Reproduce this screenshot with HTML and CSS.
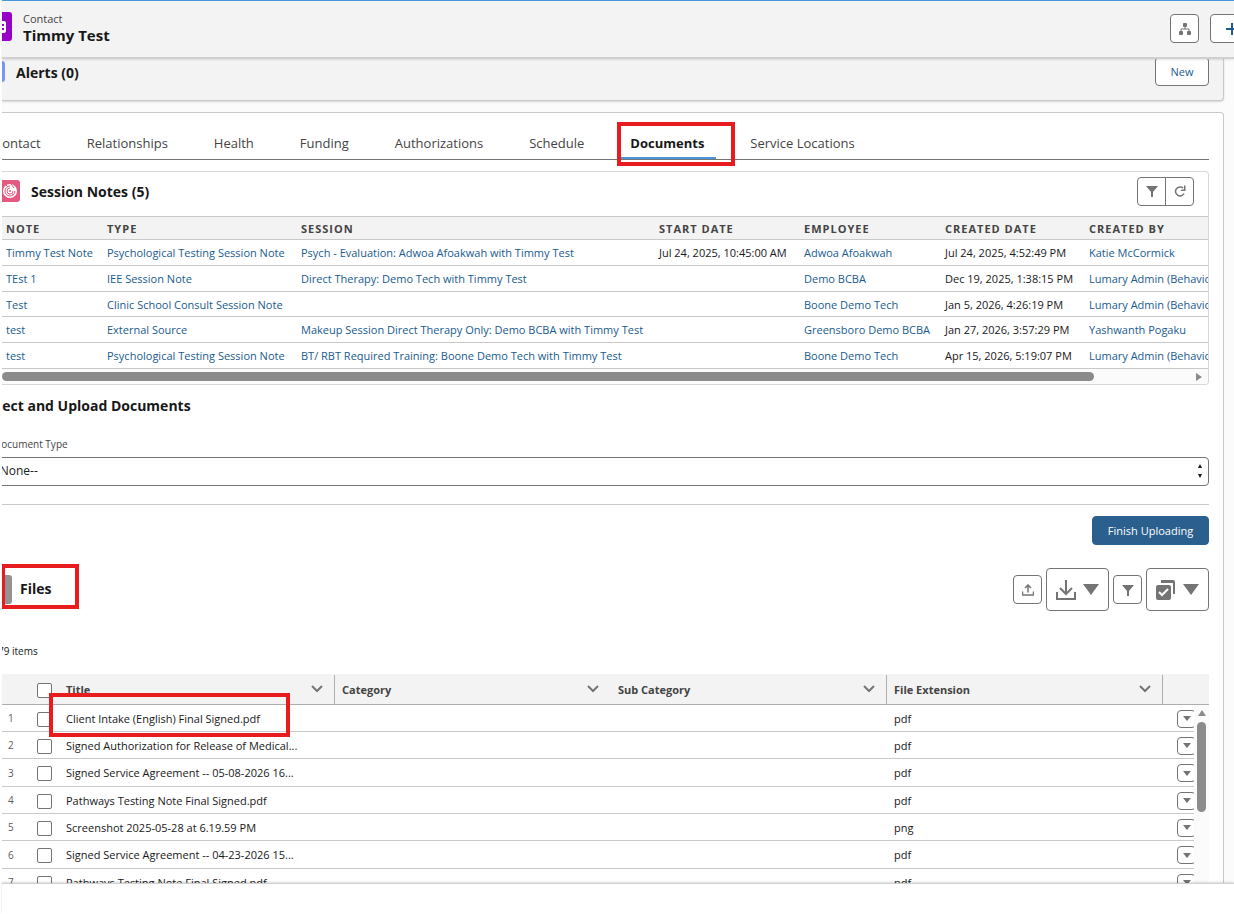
FILE: index.html
```html
<!DOCTYPE html>
<html lang="en">
<head>
  <meta charset="UTF-8">
  <meta name="viewport" content="width=device-width, initial-scale=1.0">
  <title>Timmy Test | Contact</title>
  <link rel="stylesheet" href="styles.css">
</head>
<body>

<header class="page-header">
  <svg class="icon-contact" viewBox="0 0 29 29" aria-hidden="true">
    <rect width="29" height="29" rx="3" fill="#9602c7"/>
    <rect x="6" y="9" width="17" height="12" rx="2" fill="#fff"/>
    <path d="M18 13h3M18 17h3" stroke="#9602c7" stroke-width="2"/>
    <circle cx="12" cy="14" r="3" fill="#9602c7"/>
  </svg>
  <div class="record">
    <span class="record-type">Contact</span>
    <h1>Timmy Test</h1>
  </div>
  <div class="header-actions">
    <button class="btn-icon" aria-label="View hierarchy">
      <svg width="12" height="12" viewBox="0 0 12 12" fill="#747474">
        <rect x="4" y="0" width="4" height="4" rx="1"/>
        <rect x="0" y="8" width="4" height="4" rx="1"/>
        <rect x="8" y="8" width="4" height="4" rx="1"/>
        <path d="M6 3v3M2 9V6h8v3" fill="none" stroke="#747474"/>
      </svg>
    </button>
    <button class="btn-follow" aria-label="Follow">
      <svg width="14" height="14" viewBox="0 0 14 14"><path d="M7 1v12M1 7h12" stroke="#205b8f" stroke-width="2"/></svg>
    </button>
  </div>
</header>

<main>
  <section class="alerts">
    <span class="alerts-icon"></span>
    <h2>Alerts (0)</h2>
    <button class="btn-new">New</button>
  </section>

  <div class="panel">
    <nav class="tabs">
      <a href="#">Contact</a>
      <a href="#">Relationships</a>
      <a href="#">Health</a>
      <a href="#">Funding</a>
      <a href="#">Authorizations</a>
      <a href="#">Schedule</a>
      <a href="#" class="active">Documents</a>
      <a href="#">Service Locations</a>
    </nav>

    <section class="notes">
      <div class="notes-head">
        <svg class="icon-notes" viewBox="0 0 22 22" aria-hidden="true">
          <rect width="22" height="22" rx="3" fill="#e3597f"/>
          <circle cx="12" cy="11" r="7" fill="#fff"/>
          <path d="M12 6a5 5 0 1 0 5 5M12 8a3 3 0 1 0 3 3M8 5l2 2M13 4l3 4M16 15l-2-1" fill="none" stroke="#e3597f"/>
          <circle cx="12" cy="11" r="1" fill="#e3597f"/>
        </svg>
        <h2>Session Notes (5)</h2>
        <div class="btn-group">
          <button aria-label="Filter">
            <svg width="12" height="12" viewBox="0 0 12 12"><path d="M0 1h12L7 7v5H5V7z" fill="#747474"/></svg>
          </button>
          <button aria-label="Refresh">
            <svg width="12" height="12" viewBox="0 0 12 12"><path d="M10 8.500A4.500 4.500 0 1 1 9 3" fill="none" stroke="#747474" stroke-width="1.500"/><path d="M11.500 .5V6H6L8 4.500H10V.5z" fill="#747474"/></svg>
          </button>
        </div>
      </div>
      <div class="notes-scroll">
        <table class="notes-table">
          <colgroup>
            <col class="c-note"><col class="c-type"><col class="c-session"><col class="c-start"><col class="c-employee"><col class="c-created"><col class="c-by">
          </colgroup>
          <thead>
            <tr><th>Note</th><th>Type</th><th>Session</th><th>Start Date</th><th>Employee</th><th>Created Date</th><th>Created By</th></tr>
          </thead>
          <tbody>
            <tr>
              <td><a href="#">Timmy Test Note</a></td>
              <td><a href="#">Psychological Testing Session Note</a></td>
              <td><a href="#">Psych - Evaluation: Adwoa Afoakwah with Timmy Test</a></td>
              <td>Jul 24, 2025, 10:45:00 AM</td>
              <td><a href="#">Adwoa Afoakwah</a></td>
              <td>Jul 24, 2025, 4:52:49 PM</td>
              <td><a href="#">Katie McCormick</a></td>
            </tr>
            <tr>
              <td><a href="#">TEst 1</a></td>
              <td><a href="#">IEE Session Note</a></td>
              <td><a href="#">Direct Therapy: Demo Tech with Timmy Test</a></td>
              <td></td>
              <td><a href="#">Demo BCBA</a></td>
              <td>Dec 19, 2025, 1:38:15 PM</td>
              <td><a href="#">Lumary Admin (Behavior)</a></td>
            </tr>
            <tr>
              <td><a href="#">Test</a></td>
              <td><a href="#">Clinic School Consult Session Note</a></td>
              <td></td>
              <td></td>
              <td><a href="#">Boone Demo Tech</a></td>
              <td>Jan 5, 2026, 4:26:19 PM</td>
              <td><a href="#">Lumary Admin (Behavior)</a></td>
            </tr>
            <tr>
              <td><a href="#">test</a></td>
              <td><a href="#">External Source</a></td>
              <td><a href="#">Makeup Session Direct Therapy Only: Demo BCBA with Timmy Test</a></td>
              <td></td>
              <td><a href="#">Greensboro Demo BCBA</a></td>
              <td>Jan 27, 2026, 3:57:29 PM</td>
              <td><a href="#">Yashwanth Pogaku</a></td>
            </tr>
            <tr>
              <td><a href="#">test</a></td>
              <td><a href="#">Psychological Testing Session Note</a></td>
              <td><a href="#">BT/ RBT Required Training: Boone Demo Tech with Timmy Test</a></td>
              <td></td>
              <td><a href="#">Boone Demo Tech</a></td>
              <td>Apr 15, 2026, 5:19:07 PM</td>
              <td><a href="#">Lumary Admin (Behavior)</a></td>
            </tr>
          </tbody>
        </table>
      </div>
      <div class="hscroll">
        <span class="hscroll-thumb"></span>
        <svg width="6" height="8" viewBox="0 0 6 8"><path d="M0 0l6 4-6 4z" fill="#8b8b8b"/></svg>
      </div>
    </section>

    <section class="upload">
      <h2>Select and Upload Documents</h2>
      <label for="docType">Document Type</label>
      <div class="select-wrap">
        <select id="docType">
          <option>--None--</option>
        </select>
        <svg class="select-arrows" width="6" height="14" viewBox="0 0 6 14"><path d="M3 0l2 4H1zM3 14l2-4H1z" fill="#181818"/></svg>
      </div>
      <div class="upload-footer">
        <button class="btn-brand">Finish Uploading</button>
      </div>
    </section>

    <section class="files">
      <div class="files-head">
        <span class="files-icon"></span>
        <h2>Files</h2>
        <div class="files-actions">
          <button class="btn-icon" aria-label="Upload">
            <svg width="12" height="12" viewBox="0 0 12 12" fill="none" stroke="#747474" stroke-width="1.500"><path d="M6 8.500V1M3 4l3-3 3 3M.5 7.500v3.500h11V7.500"/></svg>
          </button>
          <button class="btn-menu" aria-label="Download">
            <svg width="20" height="20" viewBox="0 0 20 20" fill="none" stroke="#747474" stroke-width="2"><path d="M10 0v13M4 8l6 6 6-6"/><path d="M1 12v7h18v-7"/></svg>
            <svg width="16" height="11" viewBox="0 0 16 11"><path d="M0 0h16L8 11z" fill="#747474"/></svg>
          </button>
          <button class="btn-icon" aria-label="Filter files">
            <svg width="12" height="12" viewBox="0 0 12 12"><path d="M0 1h12L7 7v5H5V7z" fill="#747474"/></svg>
          </button>
          <button class="btn-menu" aria-label="Select files">
            <svg width="20" height="20" viewBox="0 0 20 20"><path d="M5 0h12a2 2 0 0 1 2 2v12h-2V3H5z" fill="#747474"/><rect x="0" y="5" width="15" height="15" rx="2" fill="#747474"/><path d="M3 12l3 3 6-6" fill="none" stroke="#fff" stroke-width="2"/></svg>
            <svg width="16" height="11" viewBox="0 0 16 11"><path d="M0 0h16L8 11z" fill="#747474"/></svg>
          </button>
        </div>
        <span class="mark mark-files"></span>
      </div>
      <p class="count">79 items</p>

      <div class="files-grid">
        <table class="files-table">
          <colgroup>
            <col class="f-num"><col class="f-check"><col class="f-title"><col><col><col><col class="f-action">
          </colgroup>
          <thead>
            <tr>
              <th></th>
              <th><input type="checkbox" aria-label="Select all"></th>
              <th><div class="th">Title<svg width="12" height="8" viewBox="0 0 12 8"><path d="M1 1l5 5 5-5"/></svg></div></th>
              <th><div class="th th-open">Category<svg width="12" height="8" viewBox="0 0 12 8"><path d="M1 1l5 5 5-5"/></svg></div></th>
              <th><div class="th">Sub Category<svg width="12" height="8" viewBox="0 0 12 8"><path d="M1 1l5 5 5-5"/></svg></div></th>
              <th><div class="th">File Extension<svg width="12" height="8" viewBox="0 0 12 8"><path d="M1 1l5 5 5-5"/></svg></div></th>
              <th></th>
            </tr>
          </thead>
          <tbody id="fileRows"></tbody>
        </table>
        <div class="vscroll">
          <svg width="8" height="6" viewBox="0 0 8 6"><path d="M0 6l4-6 4 6z" fill="#8b8b8b"/></svg>
          <span class="vscroll-thumb"></span>
        </div>
        <span class="mark mark-row"></span>
      </div>
    </section>
  </div>
</main>

<footer class="utility-bar"></footer>

<script>
  const files = [
    ['Client Intake (English) Final Signed.pdf', 'pdf'],
    ['Signed Authorization for Release of Medical...', 'pdf'],
    ['Signed Service Agreement -- 05-08-2026 16...', 'pdf'],
    ['Pathways Testing Note Final Signed.pdf', 'pdf'],
    ['Screenshot 2025-05-28 at 6.19.59 PM', 'png'],
    ['Signed Service Agreement -- 04-23-2026 15...', 'pdf'],
    ['Pathways Testing Note Final Signed.pdf', 'pdf']
  ];

  document.getElementById('fileRows').innerHTML = files.map(([title, ext], i) => `
    <tr>
      <td class="num">${i + 1}</td>
      <td><input type="checkbox" aria-label="Select ${title}"></td>
      <td>${title}</td>
      <td></td>
      <td></td>
      <td>${ext}</td>
      <td class="action"><button aria-label="Show actions"><svg width="8" height="5" viewBox="0 0 8 5"><path d="M0 0h8L4 5z" fill="#747474"/></svg></button></td>
    </tr>`).join('');
</script>

</body>
</html>
```
FILE: styles.css
```css
* {
  box-sizing: border-box;
}
body {
  margin: 0;
  padding-left: 2px;
  height: 100vh;
  display: flex;
  flex-direction: column;
  overflow: hidden;
  background: #fff;
  color: #181818;
  font-family: "Open Sans", "Noto Sans", sans-serif;
  font-size: 11px;
}
h1, h2, p {
  margin: 0;
}
h2 {
  font-size: 14px;
  line-height: 20px;
}
a {
  color: #205b8f;
  text-decoration: none;
}
button {
  display: flex;
  align-items: center;
  justify-content: center;
  padding: 0;
  border: 1px solid #747474;
  border-radius: 4px;
  background: #fff;
  color: #205b8f;
  font: inherit;
  cursor: pointer;
}

/* record header */
.page-header {
  position: relative;
  z-index: 1;
  display: flex;
  flex: none;
  height: 59px;
  padding-top: 11px;
  overflow: hidden;
  background: #f3f3f3;
  border-top: 1px solid #4a96dd;
  border-bottom: 2px solid #d0d0d0;
  box-shadow: 0 1px 2px rgba(0, 0, 0, 0.1);
}
.icon-contact {
  flex: none;
  width: 29px;
  height: 29px;
  margin-left: -19px;
}
.record {
  flex: 1;
  padding-left: 11px;
}
.record-type {
  display: block;
  color: #444;
  line-height: 14px;
}
h1 {
  font-size: 15px;
  line-height: 18px;
}
.header-actions {
  display: flex;
  gap: 11px;
  margin-right: -20px;
  padding-top: 2px;
}
.btn-icon {
  width: 29px;
  height: 29px;
}
.btn-follow {
  width: 44px;
  height: 29px;
}

main {
  flex: 1;
  min-height: 0;
  overflow: hidden;
  background: #fbfbfb;
}
.alerts {
  display: flex;
  height: 42px;
  margin-right: 10px;
  padding-right: 14px;
  background: #f3f3f3;
  border: 1px solid #c9c9c9;
  border-width: 0 1px 1px 0;
  border-radius: 0 0 4px 0;
  box-shadow: 0 1px 2px rgba(0, 0, 0, 0.15);
}
.alerts-icon {
  width: 3px;
  height: 21px;
  margin-top: 2px;
  border-radius: 0 3px 3px 0;
  background: #7698f0;
}
.alerts h2 {
  flex: 1;
  padding: 4px 0 0 11px;
}
.btn-new {
  width: 54px;
  height: 29px;
  margin-top: -2px;
}

.panel {
  margin: 11px 10px 0 0;
  padding-right: 14px;
  min-height: 100%;
  background: #fff;
  border: 1px solid #c9c9c9;
  border-width: 1px 1px 0 0;
  border-radius: 0 4px 0 0;
}

/* tabs */
.tabs {
  display: flex;
  gap: 22px;
  margin-top: 10px;
  padding-top: 6px;
  border-bottom: 1px solid #747474;
}
.tabs a {
  padding: 0 12px 2px;
  color: #444;
  font-size: 13px;
  line-height: 28px;
  white-space: nowrap;
}
.tabs a:first-child {
  margin-left: -20px;
}
.tabs .active {
  position: relative;
  color: #181818;
  font-weight: bold;
  box-shadow: inset 0 -2px #4a96dd;
}
/* red highlight frames */
.mark, .tabs .active::after {
  content: "";
  position: absolute;
  border: 4px solid #e81c1e;
  pointer-events: none;
}
.tabs .active::after {
  inset: -7px -19px -7px -1px;
}

/* session notes */
.notes {
  margin-top: 11px;
  border: 1px solid #d8d8d8;
  border-left: 0;
  border-radius: 0 4px 4px 0;
  overflow: hidden;
}
.notes-head {
  display: flex;
  align-items: center;
  height: 44px;
  padding-right: 14px;
}
.icon-notes {
  flex: none;
  width: 22px;
  height: 22px;
  margin: -6px 0 0 -4px;
}
.notes-head h2 {
  flex: 1;
  padding: 0 0 4px 11px;
}
.btn-group {
  display: flex;
  margin-bottom: 6px;
}
.btn-group button {
  width: 29px;
  height: 29px;
}
.btn-group button:first-child {
  border-radius: 4px 0 0 4px;
}
.btn-group button:last-child {
  margin-left: -1px;
  border-radius: 0 4px 4px 0;
}
.notes-scroll {
  overflow: hidden;
}
table {
  border-collapse: separate;
  border-spacing: 0;
  table-layout: fixed;
}
th, td {
  padding: 0;
  border-bottom: 1px solid #c9c9c9;
  text-align: left;
  white-space: nowrap;
}
th {
  background: #f3f3f3;
  color: #444;
}
.notes-table {
  width: 1300px;
}
.notes-table th {
  height: 24px;
  border-top: 1px solid #c9c9c9;
  letter-spacing: 1px;
  text-transform: uppercase;
}
.notes-table th, .notes-table td {
  padding-left: 4px;
}
.notes-table td {
  height: 26px;
}
.notes-table tr:nth-child(3) td {
  height: 25px;
}
.c-note { width: 101px; }
.c-type { width: 194px; }
.c-session { width: 358px; }
.c-start { width: 145px; }
.c-employee { width: 141px; }
.c-created { width: 144px; }
.hscroll {
  display: flex;
  align-items: center;
  justify-content: space-between;
  height: 15px;
  padding-right: 6px;
  background: #fbfbfb;
}
.hscroll-thumb {
  width: 91%;
  height: 9px;
  border-radius: 5px;
  background: #8b8b8b;
}

/* upload form */
.upload h2 {
  margin: 11px 0 0 -20px;
}
.upload label {
  display: block;
  margin: 20px 0 4px -8px;
  color: #444;
  font-size: 10px;
  line-height: 17px;
}
.select-wrap {
  position: relative;
  margin-left: -11px;
}
select {
  appearance: none;
  display: block;
  width: 100%;
  height: 29px;
  padding: 0 0 2px;
  border: 1px solid #747474;
  border-radius: 4px;
  background: #fff;
  color: #181818;
  font: inherit;
  font-size: 12px;
}
.select-arrows {
  position: absolute;
  top: 7px;
  right: 6px;
}
.upload-footer {
  display: flex;
  justify-content: flex-end;
  margin-top: 18px;
  padding-top: 11px;
  border-top: 1px solid #c9c9c9;
}
.btn-brand {
  width: 117px;
  height: 29px;
  border-color: #2b5f8e;
  background: #2b5f8e;
  color: #fff;
}

/* files */
.files-head {
  position: relative;
  display: flex;
  align-items: center;
  height: 43px;
  margin-top: 23px;
}
.files-icon {
  width: 10px;
  height: 29px;
  border-radius: 0 3px 3px 0;
  background: #939393;
}
.files-head h2 {
  flex: 1;
  padding: 0 0 2px 8px;
}
.files-actions {
  display: flex;
  align-items: center;
  gap: 4px;
}
.btn-menu {
  gap: 7px;
  width: 63px;
  height: 43px;
}
.mark-files {
  top: -4px;
  left: -1px;
  width: 78px;
  height: 45px;
}
.count {
  margin: 32px 0 14px -4px;
  font-size: 10px;
  line-height: 17px;
}
.files-grid {
  position: relative;
}
.files-table {
  width: 100%;
}
.files-table th {
  height: 31px;
  border-bottom-color: #aeaeae;
}
.files-table td {
  height: 27px;
}
.files-table tr:nth-child(3n) td {
  height: 28px;
}
.files-table td:nth-child(n+4), .files-table th:nth-child(n+4) {
  padding-left: 7px;
}
.f-num { width: 35px; }
.f-check { width: 29px; }
.f-title { width: 269px; }
.f-action { width: 46px; }
.th {
  display: flex;
  align-items: center;
  justify-content: space-between;
  height: 29px;
  padding-right: 11px;
  border-right: 1px solid #aeaeae;
}
.th-open {
  border-right-color: transparent;
}
.th svg {
  fill: none;
  stroke: #747474;
  stroke-width: 2;
}
.num {
  color: #5c5c5c;
  font-size: 10px;
}
.files-table .num {
  padding-left: 6px;
}
input[type="checkbox"] {
  appearance: none;
  display: block;
  width: 15px;
  height: 15px;
  margin: 2px 0 0;
  border: 1px solid #747474;
  border-radius: 2px;
  background: #fff;
}
.action button {
  width: 19px;
  height: 18px;
  margin: 1px 0 0 7px;
}
.vscroll {
  position: absolute;
  top: 31px;
  right: 0;
  bottom: 0;
  display: flex;
  flex-direction: column;
  align-items: center;
  gap: 6px;
  width: 15px;
  padding-top: 5px;
  background: #fbfbfb;
}
.vscroll-thumb {
  width: 9px;
  height: 90px;
  border-radius: 5px;
  background: #8b8b8b;
}
.mark-row {
  top: 19px;
  left: 47px;
  width: 241px;
  height: 44px;
}

.utility-bar {
  position: relative;
  flex: none;
  height: 31px;
  background: #fff;
  border-top: 1px solid #d0d0d0;
  box-shadow: 0 -1px 2px rgba(0, 0, 0, 0.15);
}
```
